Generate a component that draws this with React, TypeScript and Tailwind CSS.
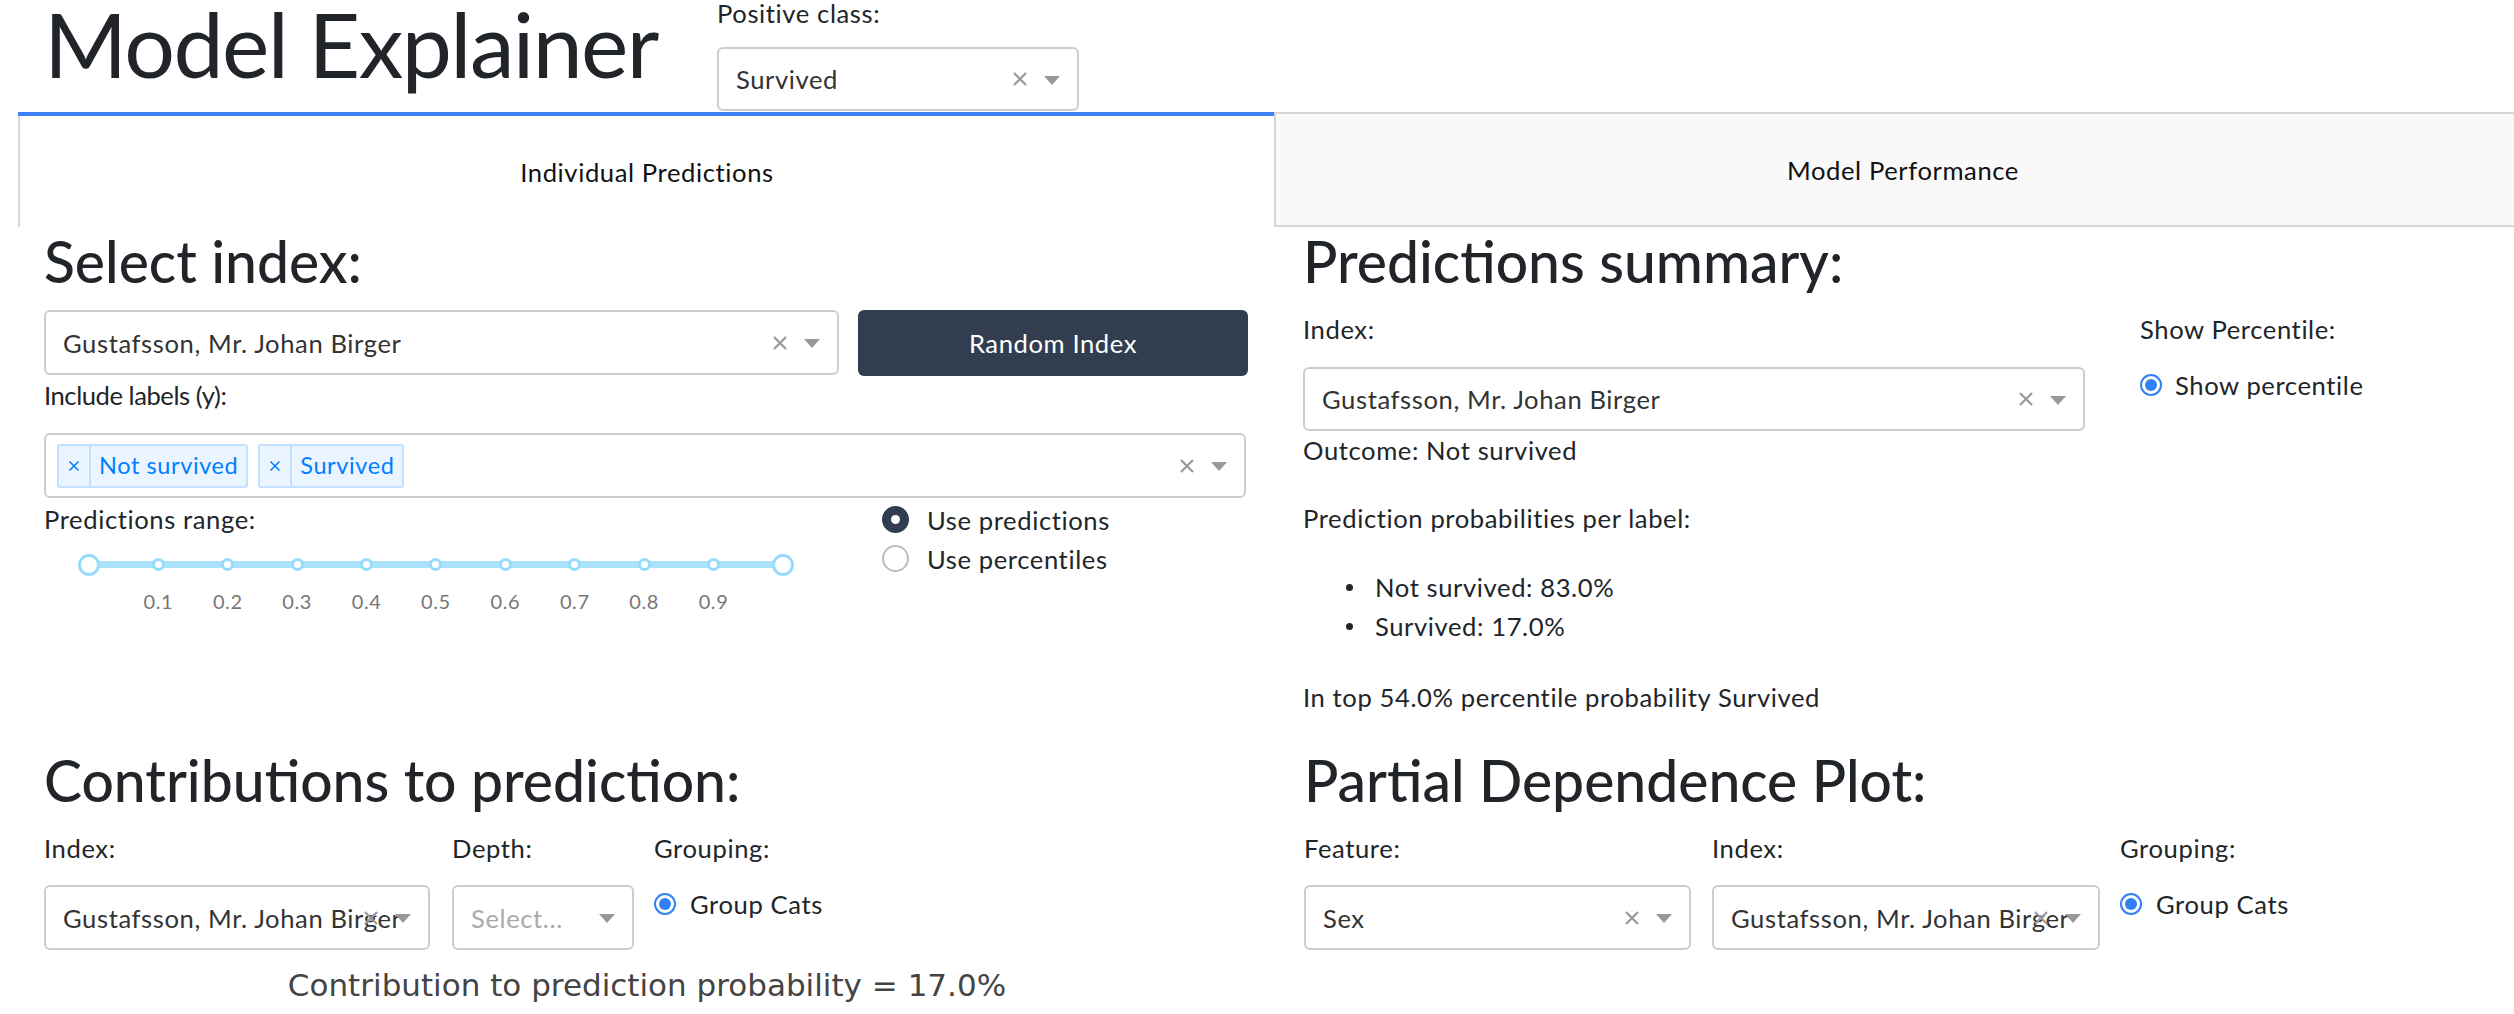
import React from "react";

const ClearX = ({ size = 16, color = "#999999", sw = 2.2 }: { size?: number; color?: string; sw?: number }) => (
  <svg width={size} height={size} viewBox="0 0 16 16" className="shrink-0">
    <path d="M2 2L14 14M14 2L2 14" stroke={color} strokeWidth={sw} fill="none" />
  </svg>
);

const Caret = () => (
  <div className="w-0 h-0 border-x-[8px] border-x-transparent border-t-[9px] border-t-[#999999] mt-[2px]" />
);

function Select({
  value,
  placeholder,
  clearable = true,
  className = "",
}: {
  value?: string;
  placeholder?: string;
  clearable?: boolean;
  className?: string;
}) {
  return (
    <div className={`relative border-2 border-[#cccccc] rounded-[6px] bg-white overflow-hidden ${className}`}>
      <span
        className={`absolute left-[17px] top-0 bottom-0 flex items-center whitespace-nowrap text-[25.6px] ${
          value ? "text-[#333333]" : "text-[#aaaaaa]"
        }`}
      >
        {value ?? placeholder}
      </span>
      <div className="absolute right-[17px] top-0 bottom-0 flex items-center gap-[16px]">
        {clearable && <ClearX />}
        <Caret />
      </div>
    </div>
  );
}

const Tag = ({ label }: { label: string }) => (
  <div className="flex h-[44px] border-2 border-[#c2e0ff] bg-[#ebf5ff] rounded-[3px] text-[#007eff]">
    <div className="w-[32px] flex items-center justify-center border-r-2 border-[#c2e0ff]">
      <ClearX size={12} color="#007eff" sw={2} />
    </div>
    <div className="px-[8px] flex items-center leading-none text-[23.5px]">{label}</div>
  </div>
);

const NativeRadio = () => (
  <div className="w-[22px] h-[22px] rounded-full border-[2.5px] border-[#3280f6] flex items-center justify-center shrink-0">
    <div className="w-[12px] h-[12px] rounded-full bg-[#3280f6]" />
  </div>
);

const Heading = ({ children }: { children: React.ReactNode }) => (
  <h2 className="text-[57px] leading-[68px] font-medium tracking-normal mb-[15px] text-[#212529]">{children}</h2>
);

function Slider() {
  const marks = ["", "0.1", "0.2", "0.3", "0.4", "0.5", "0.6", "0.7", "0.8", "0.9", ""];
  return (
    <div className="relative ml-[45px] w-[694px] h-[90px]">
      <div className="absolute left-0 right-0 top-[23px] h-[7px] bg-[#abe2fb]" />
      <div className="absolute left-0 right-0 top-[26.5px] flex justify-between">
        {marks.map((_, i) => (
          <div key={i} className="w-0 h-0 flex items-center justify-center">
            {i === 0 || i === marks.length - 1 ? (
              <div className="w-[22px] h-[22px] shrink-0 rounded-full bg-white border-[3px] border-[#96dbfa]" />
            ) : (
              <div className="w-[13px] h-[13px] shrink-0 rounded-full bg-white border-[3px] border-[#96dbfa]" />
            )}
          </div>
        ))}
      </div>
      <div className="absolute left-0 right-0 top-[53px] flex justify-between">
        {marks.map((m, i) => (
          <div key={i} className="w-0 flex justify-center">
            <span className="whitespace-nowrap text-[20px] leading-none text-[#777777]">{m}</span>
          </div>
        ))}
      </div>
    </div>
  );
}

export default function App() {
  return (
    <div className="w-[2514px] h-[1014px] overflow-hidden bg-white text-[#212529] [font-family:Lato,sans-serif] text-[25.6px] leading-[38px] tracking-[0.6px]">
      {/* Header */}
      <div className="flex h-[112px] pl-[44px]">
        <div className="w-[673px] text-[89.6px] leading-[88px] font-normal tracking-[-1.6px] whitespace-nowrap">Model Explainer</div>
        <div className="flex flex-col">
          <div className="leading-[26px]">Positive class:</div>
          <Select value="Survived" className="mt-[21px] w-[362px] h-[64px]" />
        </div>
      </div>

      {/* Tabs */}
      <div className="flex ml-[18px] h-[115px] w-[2600px]">
        <div className="w-[1256px] shrink-0 flex flex-col">
          <div className="h-[4px] bg-[#3b80f5]" />
          <div className="flex-1 border-l-2 border-[#d6d6d6] flex items-center justify-center text-[#111111]">
            Individual Predictions
          </div>
        </div>
        <div className="w-[1256px] shrink-0 bg-[#f9f9f9] border-2 border-r-0 border-[#d6d6d6] flex items-center justify-center text-[#111111]">
          Model Performance
        </div>
      </div>

      {/* Main grid */}
      <div className="ml-[19px] grid grid-cols-[1257px_1257px] w-[2514px]">
        {/* Select index */}
        <div className="pl-[25px] pr-[26px]">
          <Heading>Select index:</Heading>
          <div className="flex">
            <Select value="Gustafsson, Mr. Johan Birger" className="w-[795px] h-[65px]" />
            <button className="ml-[19px] w-[390px] h-[66px] rounded-[6px] bg-[#323e50] text-white">Random Index</button>
          </div>
          <div className="mb-[19px] tracking-[-0.45px]">Include labels (y):</div>
          <div className="relative w-[1202px] h-[65px] border-2 border-[#cccccc] rounded-[6px] flex items-center pl-[11px] gap-[10px]">
            <Tag label="Not survived" />
            <Tag label="Survived" />
            <div className="absolute right-[17px] top-0 bottom-0 flex items-center gap-[16px]">
              <ClearX />
              <Caret />
            </div>
          </div>
          <div className="flex mt-[2px]">
            <div className="w-[838px]">
              <div>Predictions range:</div>
              <Slider />
            </div>
            <div className="flex flex-col">
              <div className="flex items-center h-[39px] gap-[18px]">
                <div className="w-[27px] h-[27px] rounded-full bg-[#323e50] flex items-center justify-center">
                  <div className="w-[9px] h-[9px] rounded-full bg-white" />
                </div>
                <span>Use predictions</span>
              </div>
              <div className="flex items-center h-[39px] gap-[18px]">
                <div className="w-[27px] h-[27px] rounded-full border-2 border-[#b8bec5] bg-white" />
                <span>Use percentiles</span>
              </div>
            </div>
          </div>
        </div>

        {/* Predictions summary */}
        <div className="pl-[27px] pb-[30px]">
          <Heading>Predictions summary:</Heading>
          <div className="flex">
            <div className="w-[837px]">
              <div className="mb-[19px]">Index:</div>
              <Select value="Gustafsson, Mr. Johan Birger" className="w-[782px] h-[64px]" />
              <div>Outcome: Not survived</div>
              <div className="mt-[30px]">Prediction probabilities per label:</div>
              <ul className="mt-[31px]">
                <li className="flex items-center leading-[39px]">
                  <span className="ml-[43px] w-[7px] h-[7px] rounded-full bg-[#212529]" />
                  <span className="ml-[22px]">Not survived: 83.0%</span>
                </li>
                <li className="flex items-center leading-[39px]">
                  <span className="ml-[43px] w-[7px] h-[7px] rounded-full bg-[#212529]" />
                  <span className="ml-[22px]">Survived: 17.0%</span>
                </li>
              </ul>
              <div className="mt-[32px]">In top 54.0% percentile probability Survived</div>
            </div>
            <div>
              <div className="mb-[18px]">Show Percentile:</div>
              <div className="flex items-center h-[38px] gap-[13px]">
                <NativeRadio />
                <span>Show percentile</span>
              </div>
            </div>
          </div>
        </div>

        {/* Contributions */}
        <div className="pl-[25px] pr-[26px]">
          <Heading>Contributions to prediction:</Heading>
          <div className="flex">
            <div className="w-[386px]">
              <div className="mb-[18px]">Index:</div>
              <Select value="Gustafsson, Mr. Johan Birger" className="w-[386px] h-[65px]" />
            </div>
            <div className="ml-[22px] w-[182px]">
              <div className="mb-[18px]">Depth:</div>
              <Select placeholder="Select..." clearable={false} className="w-[182px] h-[65px]" />
            </div>
            <div className="ml-[20px]">
              <div className="mb-[18px]">Grouping:</div>
              <div className="flex items-center h-[38px] gap-[14px]">
                <NativeRadio />
                <span>Group Cats</span>
              </div>
            </div>
          </div>
          <div className="mt-[20px] text-center whitespace-nowrap [font-family:'DejaVu_Sans',Verdana,sans-serif] text-[31px] leading-none tracking-normal text-[#444444]">
            Contribution to prediction probability = 17.0%
          </div>
        </div>

        {/* PDP */}
        <div className="pl-[28px]">
          <Heading>Partial Dependence Plot:</Heading>
          <div className="flex">
            <div className="w-[387px]">
              <div className="mb-[18px]">Feature:</div>
              <Select value="Sex" className="w-[387px] h-[65px]" />
            </div>
            <div className="ml-[21px] w-[388px]">
              <div className="mb-[18px]">Index:</div>
              <Select value="Gustafsson, Mr. Johan Birger" className="w-[388px] h-[65px]" />
            </div>
            <div className="ml-[20px]">
              <div className="mb-[18px]">Grouping:</div>
              <div className="flex items-center h-[38px] gap-[14px]">
                <NativeRadio />
                <span>Group Cats</span>
              </div>
            </div>
          </div>
        </div>
      </div>
    </div>
  );
}
